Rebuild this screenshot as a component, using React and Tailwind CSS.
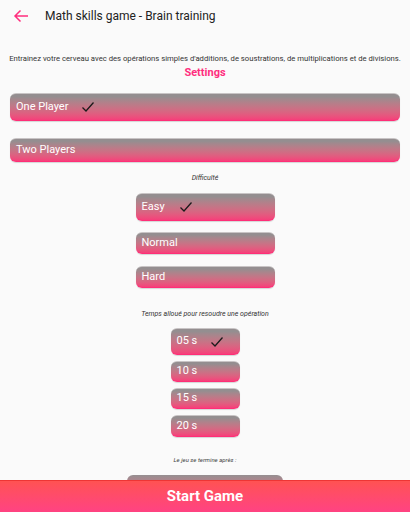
import React from "react";

const Check = () => (
  <svg width="14" height="12" viewBox="0 0 14 12" className="shrink-0">
    <polyline points="1.5,6.5 5,10 12.5,1.5" fill="none" stroke="#1a1a1a" strokeWidth="1.3" />
  </svg>
);

const Btn = ({ label, selected, className = "", checkGap = "ml-3" }) => (
  <div
    className={
      "flex items-center rounded-[6px] bg-gradient-to-b from-[#948e90] from-10% to-[#f63e7a] border-b border-[#ff2e77] border-t border-t-[#c8c4c5] shadow-[0_1px_1px_rgba(0,0,0,0.15)] px-[6px] text-white text-[11px] " +
      (selected ? "h-[28px] " : "h-[22px] ") +
      className
    }
  >
    <span>{label}</span>
    {selected && <span className={checkGap}><Check /></span>}
  </div>
);

export default function App() {
  return (
    <div className="relative w-[410px] h-[512px] overflow-hidden bg-[#fafafa] font-['Roboto',sans-serif]">
      <div className="flex items-center h-[32px]">
        <svg width="16" height="14" viewBox="0 0 16 14" className="ml-[13px]">
          <path d="M15 7H2M7.5 1.5L2 7l5.5 5.5" fill="none" stroke="#ff2e7e" strokeWidth="1.5" />
        </svg>
        <span className="ml-[16px] text-[12px] text-[#222]">Math skills game - Brain training</span>
      </div>
      <div className="mt-[22px] text-center text-[7.7px] leading-[10px] text-[#333] whitespace-nowrap">
        Entrainez votre cerveau avec des opérations simples d'additions, de soustrations, de multiplications et de divisions.
      </div>
      <div className="mt-[2px] text-center text-[11px] leading-[14px] font-bold text-[#ff2e7e]">Settings</div>

      <div className="px-[10px] mt-[13px]">
        <Btn label="One Player" selected checkGap="ml-[13px]" />
        <Btn label="Two Players" className="mt-[17px] !h-[24px]" />
      </div>

      <div className="mt-[11px] text-center italic text-[7px] leading-[10px] text-[#333]">Difficulté</div>
      <div className="flex flex-col items-center mt-[10px]">
        <div className="w-[139px]">
          <Btn label="Easy" selected checkGap="ml-[14px]" />
          <Btn label="Normal" className="mt-[11px]" />
          <Btn label="Hard" className="mt-[12px]" />
        </div>
      </div>

      <div className="mt-[21px] text-center italic text-[7px] leading-[10px] text-[#333]">Temps alloué pour resoudre une opération</div>
      <div className="flex flex-col items-center mt-[9px]">
        <div className="w-[69px]">
          <Btn label="05 s" selected checkGap="ml-[13px]" className="!h-[27px]" />
          <Btn label="10 s" className="mt-[6px] !h-[21px]" />
          <Btn label="15 s" className="mt-[6px] !h-[21px]" />
          <Btn label="20 s" className="mt-[6px] !h-[22px]" />
        </div>
      </div>

      <div className="mt-[18px] text-center italic text-[6px] leading-[10px] text-[#444]">Le jeu se termine après :</div>
      <div className="flex justify-center mt-[10px]">
        <div className="w-[156px] h-[28px] rounded-[6px] bg-gradient-to-b from-[#958f91] to-[#f83e7b]" />
      </div>

      <div className="absolute left-0 right-0 bottom-0 h-[32px] flex items-center justify-center border-t border-[#ee3535] bg-gradient-to-b from-[#ff5252] to-[#ff4282] text-white font-bold text-[15px]">
        Start Game
      </div>
    </div>
  );
}
